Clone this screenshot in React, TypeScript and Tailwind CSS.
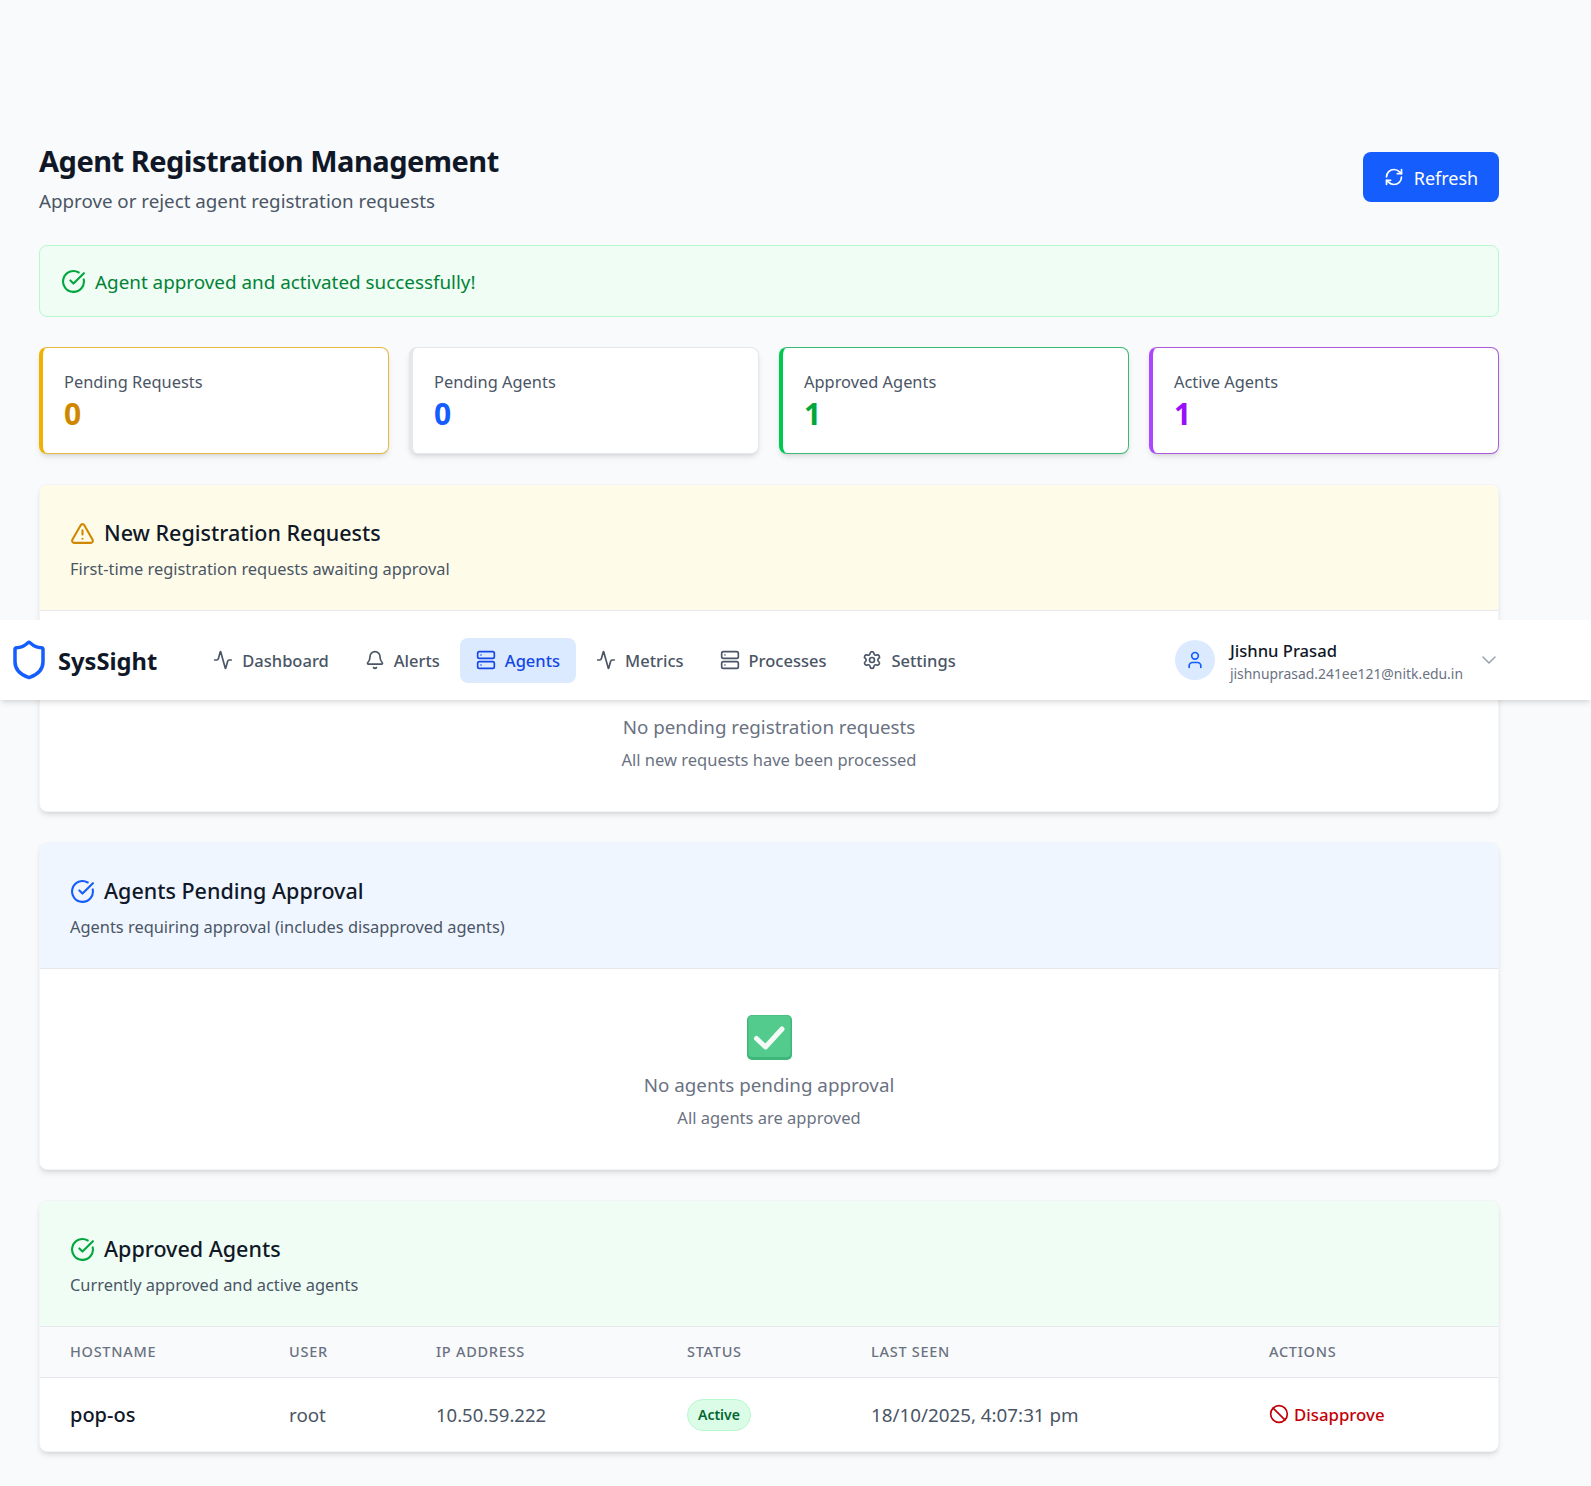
import type { ReactNode } from "react";
import { Activity, Ban, Bell, ChevronDown, CircleCheckBig, RefreshCw, Server, Settings, Shield, TriangleAlert, User } from "lucide-react";

const navItems = [
  { label: "Dashboard", icon: Activity },
  { label: "Alerts", icon: Bell },
  { label: "Agents", icon: Server, active: true },
  { label: "Metrics", icon: Activity },
  { label: "Processes", icon: Server },
  { label: "Settings", icon: Settings },
];

const stats = [
  { label: "Pending Requests", value: "0", box: "border-[#e5b93f] border-l-yellow-500", text: "text-yellow-600" },
  { label: "Pending Agents", value: "0", box: "border-gray-200", text: "text-blue-600" },
  { label: "Approved Agents", value: "1", box: "border-[#3bb873] border-l-green-500", text: "text-green-600" },
  { label: "Active Agents", value: "1", box: "border-[#ab5ada] border-l-purple-500", text: "text-purple-600" },
];

const columns = ["Hostname", "User", "IP Address", "Status", "Last Seen", "Actions"];

export default function App() {
  return (
    <div className="relative min-h-[1486px] bg-gray-50 font-['Noto_Sans',sans-serif] text-gray-900">
      <main className="ml-[39px] w-[1460px] pt-[143px]">
        <header className="mb-[30px] flex items-start justify-between">
          <div>
            <h1 className="text-[29px] leading-9 font-bold tracking-[-0.5px]">Agent Registration Management</h1>
            <p className="mt-2 text-[18.75px] leading-7 text-gray-600">Approve or reject agent registration requests</p>
          </div>
          <button className="mt-[9px] flex h-[50px] w-[136px] items-center justify-center gap-2.5 rounded-lg bg-blue-600 text-lg text-white">
            <RefreshCw size={20} />
            <span className="pt-0.5">Refresh</span>
          </button>
        </header>

        <div className="flex h-[72px] items-center gap-[9px] rounded-lg border border-green-200 bg-green-50 pl-[21px] text-[18.85px] text-green-700">
          <CircleCheckBig size={25} className="text-green-600" />
          <span className="pt-0.5">Agent approved and activated successfully!</span>
        </div>

        <div className="mt-[30px] grid grid-cols-4 gap-5">
          {stats.map((s) => (
            <div key={s.label} className={`rounded-lg border border-l-4 bg-white pt-5 pr-5 pb-[21px] pl-[21px] shadow-md ${s.box}`}>
              <p className="mt-0.5 text-[16.4px] leading-6 text-gray-600">{s.label}</p>
              <p className={`mt-0.5 text-3xl font-bold ${s.text}`}>{s.value}</p>
            </div>
          ))}
        </div>

        <Panel
          tint="bg-yellow-50"
          icon={<TriangleAlert size={25} className="text-yellow-600" />}
          title="New Registration Requests"
          subtitle="First-time registration requests awaiting approval"
        >
          <Empty title="No pending registration requests" note="All new requests have been processed" hideMark />
        </Panel>

        <Panel
          tint="bg-blue-50"
          icon={<CircleCheckBig size={25} className="text-blue-600" />}
          title="Agents Pending Approval"
          subtitle="Agents requiring approval (includes disapproved agents)"
        >
          <Empty title="No agents pending approval" note="All agents are approved" />
        </Panel>

        <Panel
          tint="bg-green-50"
          icon={<CircleCheckBig size={25} className="text-green-600" />}
          title="Approved Agents"
          subtitle="Currently approved and active agents"
        >
          <table className="w-full table-fixed text-left">
            <colgroup>
              <col className="w-[219px]" />
              <col className="w-[147px]" />
              <col className="w-[251px]" />
              <col className="w-[184px]" />
              <col className="w-[398px]" />
              <col />
            </colgroup>
            <thead className="bg-gray-50">
              <tr className="h-[50px] border-b border-gray-200">
                {columns.map((c) => (
                  <th key={c} className="pl-[30px] text-[14.5px] font-medium tracking-wider text-gray-500 uppercase">
                    {c}
                  </th>
                ))}
              </tr>
            </thead>
            <tbody>
              <tr className="h-[74px] text-[18.8px] text-gray-600">
                <td className="pt-0.5 pl-[30px] text-xl font-medium text-gray-900">pop-os</td>
                <td className="pt-0.5 pl-[30px]">root</td>
                <td className="pt-0.5 pl-[30px] text-[18.5px]">10.50.59.222</td>
                <td className="pt-0.5 pl-[30px]">
                  <span className="inline-flex h-8 items-center rounded-full border border-green-200 bg-green-100 px-2.5 text-sm font-semibold text-green-800">
                    Active
                  </span>
                </td>
                <td className="pt-0.5 pl-[30px]">18/10/2025, 4:07:31 pm</td>
                <td className="pl-[30px]">
                  <span className="flex items-center gap-[5px] text-[16.8px] font-medium text-red-700">
                    <Ban size={20} />
                    Disapprove
                  </span>
                </td>
              </tr>
            </tbody>
          </table>
        </Panel>
      </main>

      {/* the sticky nav, caught mid-page by the full page capture */}
      <nav className="absolute top-[620px] left-0 z-10 flex h-20 w-full items-center justify-between bg-white pr-[90px] pl-2 shadow-md">
        <div className="flex items-center">
          <div className="flex items-center gap-2">
            <Shield size={42} className="text-blue-600" />
            <span className="pt-1 text-[23.7px] font-bold">SysSight</span>
          </div>
          <div className="ml-10 flex gap-1">
            {navItems.map((item) => (
              <a
                key={item.label}
                className={`flex h-[45px] items-center gap-[9px] rounded-lg px-4 text-[16.5px] font-medium ${
                  item.active ? "bg-blue-100 text-blue-700" : "text-gray-600"
                }`}
              >
                <item.icon size={20} />
                <span className="pt-0.5">{item.label}</span>
              </a>
            ))}
          </div>
        </div>
        <div className="flex items-center">
          <span className="flex h-10 w-10 items-center justify-center rounded-full bg-blue-100 text-blue-600">
            <User size={20} />
          </span>
          <div className="ml-[15px] pt-1">
            <p className="text-[16.6px] font-medium">Jishnu Prasad</p>
            <p className="text-[13.9px] text-gray-500">jishnuprasad.241ee121@nitk.edu.in</p>
          </div>
          <ChevronDown size={24} strokeWidth={1.5} className="ml-[14px] text-gray-400" />
        </div>
      </nav>
    </div>
  );
}

function Panel({ tint, icon, title, subtitle, children }: { tint: string; icon: ReactNode; title: string; subtitle: string; children: ReactNode }) {
  return (
    <section className="mt-[30px] overflow-hidden rounded-lg border border-gray-100 bg-white shadow-md">
      <div className={`border-b border-gray-200 px-[30px] pt-[30px] pb-[29px] ${tint}`}>
        <div className="flex h-9 items-center gap-[9px]">
          {icon}
          <h2 className="text-[21.5px] font-medium">{title}</h2>
        </div>
        <p className="mt-1.5 text-[16.4px] leading-6 text-gray-600">{subtitle}</p>
      </div>
      {children}
    </section>
  );
}

function Empty({ title, note, hideMark }: { title: string; note: string; hideMark?: boolean }) {
  return (
    <div className="flex flex-col items-center pt-[46px] pb-[39px]">
      <svg width="45" height="45" viewBox="0 0 45 45" className={hideMark ? "invisible" : ""}>
        <rect width="45" height="45" rx="5" fill="#3fb77a" />
        <rect x="1.5" y="0.5" width="42" height="41.5" rx="4" fill="#52cb8c" />
        <path d="M9.5 23.5 L18.5 32 L35 14" fill="none" stroke="#f4fbf7" strokeWidth="5" strokeLinecap="round" strokeLinejoin="round" />
      </svg>
      <p className="mt-[11px] text-[18.8px] leading-7 text-gray-500">{title}</p>
      <p className="mt-[7px] text-[16.5px] leading-6 text-gray-500">{note}</p>
    </div>
  );
}
